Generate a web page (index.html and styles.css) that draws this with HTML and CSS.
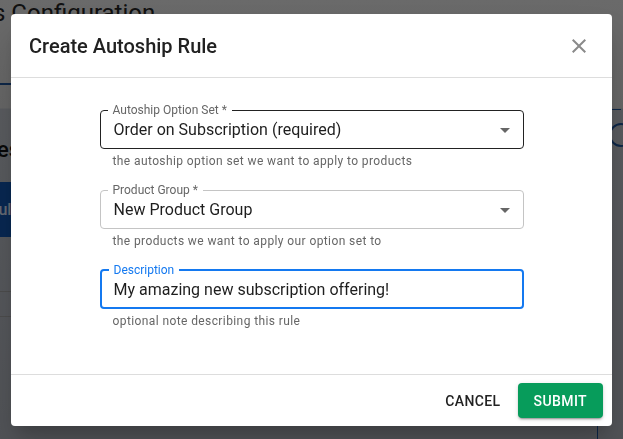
FILE: index.html
```html
<!DOCTYPE html>
<html lang="en">
<head>
  <meta charset="UTF-8">
  <meta name="viewport" content="width=device-width, initial-scale=1.0">
  <title>Autoships Configuration</title>
  <link rel="stylesheet" href="styles.css">
</head>
<body>
  <!-- Pagina sotto il dialog -->
  <div class="page">
    <h1 class="page-title">Autoships Configuration</h1>
    <div class="tabs">
      <span class="tab-indicator"></span>
    </div>
    <div class="page-body">
      <section class="rules">
        <h2>Autoship Rules</h2>
        <button class="add-btn">Add New Rule</button>
        <div class="rule-row"></div>
        <div class="rule-row short"></div>
      </section>
      <aside class="side">
        <span class="side-line"></span>
        <span class="ring"></span>
      </aside>
    </div>
    <div class="col-line"></div>
  </div>

  <!-- Dialog -->
  <div class="backdrop">
    <div class="dialog">
      <div class="dialog-head">
        <h3>Create Autoship Rule</h3>
        <button class="close-btn" aria-label="close">
          <svg viewBox="0 0 24 24" width="24" height="24"><path d="M19 6.41 17.59 5 12 10.59 6.41 5 5 6.41 10.59 12 5 17.59 6.41 19 12 13.41 17.59 19 19 17.59 13.41 12z"/></svg>
        </button>
      </div>

      <div class="dialog-body">
        <div class="form-group">
          <fieldset class="field hover">
            <legend>Autoship Option Set *</legend>
            <div class="value">
              <span>Order on Subscription (required)</span>
              <svg class="arrow" viewBox="0 0 24 24" width="24" height="24"><path d="M7 10l5 5 5-5z"/></svg>
            </div>
          </fieldset>
          <p class="helper">the autoship option set we want to apply to products</p>
        </div>

        <div class="form-group">
          <fieldset class="field">
            <legend>Product Group *</legend>
            <div class="value">
              <span>New Product Group</span>
              <svg class="arrow" viewBox="0 0 24 24" width="24" height="24"><path d="M7 10l5 5 5-5z"/></svg>
            </div>
          </fieldset>
          <p class="helper">the products we want to apply our option set to</p>
        </div>

        <div class="form-group">
          <fieldset class="field focused">
            <legend>Description</legend>
            <div class="value">
              <span>My amazing new subscription offering!</span>
            </div>
          </fieldset>
          <p class="helper">optional note describing this rule</p>
        </div>
      </div>

      <div class="dialog-foot">
        <button class="btn-text">Cancel</button>
        <button class="btn-submit">Submit</button>
      </div>
    </div>
  </div>
</body>
</html>
```

FILE: styles.css
```css
/* Stile generale */
body {
  margin: 0;
  height: 439px;
  overflow: hidden;
  font-family: Roboto, 'Liberation Sans', sans-serif;
  background: #b1b6be;
}

/* Pagina sotto il dialog */
.page {
  display: flex;
  flex-direction: column;
  height: 100%;
  background: linear-gradient(#d4d4d4 0, #cdcdcd 108px, #b4b8bf 109px, #a4a8b0 100%);
}

.page-title {
  margin: 0 0 0 -102px;
  font-size: 24px;
  line-height: 26px;
  font-weight: 400;
  color: #222;
  white-space: nowrap;
}

.tabs {
  display: flex;
  margin-top: 57px;
}

.tab-indicator {
  width: 120px;
  height: 2px;
  background: #1b4d8f;
}

.page-body {
  display: flex;
  justify-content: space-between;
}

.rules {
  margin-left: -160px;
  width: 180px;
}

.rules h2 {
  margin: 51px 0 0;
  font-size: 22px;
  line-height: 28px;
  font-weight: 500;
  text-align: right;
  color: #111;
  white-space: nowrap;
}

.add-btn {
  display: block;
  width: 100%;
  height: 55px;
  margin-top: 18px;
  padding: 0;
  border: none;
  background: #0f4fa3;
  color: #c8d4e6;
  font: 500 16px Roboto, sans-serif;
  text-align: right;
}

.rule-row {
  height: 54px;
  border-bottom: 1px solid #999;
}

.rule-row.short {
  height: 24px;
}

.side {
  display: flex;
  flex-direction: column;
  padding-top: 24px;
}

.side-line {
  width: 12px;
  height: 1px;
  background: #1b4d8f;
}

.ring {
  width: 20px;
  height: 20px;
  margin: 13px -10px 0 0;
  border: 2px solid #1b4d8f;
  border-radius: 50%;
}

.col-line {
  width: 1px;
  height: 14px;
  margin: auto 0 0 597px;
  background: #1b4d8f;
}

/* Dialog */
.backdrop {
  position: fixed;
  inset: 0;
  display: flex;
  align-items: flex-start;
  padding: 14px 0 0 11px;
  background: rgba(0, 0, 0, 0.5);
}

.dialog {
  width: 601px;
  background: #fff;
  border-radius: 4px;
  box-shadow: 0 11px 15px -7px rgba(0, 0, 0, 0.2), 0 24px 38px 3px rgba(0, 0, 0, 0.14);
}

.dialog-head {
  display: flex;
  align-items: center;
  justify-content: space-between;
  height: 63px;
  padding: 0 21px 0 18px;
  border-bottom: 1px solid #ddd;
}

.dialog-head h3 {
  margin: 0;
  font-size: 20px;
  font-weight: 500;
  color: #212121;
}

.close-btn {
  display: flex;
  padding: 0;
  border: none;
  background: none;
}

.close-btn svg {
  fill: #8a8a8a;
}

.dialog-body {
  width: 424px;
  margin: 0 auto;
  padding: 26px 0 44px;
}

.form-group {
  margin-bottom: 14px;
}

.form-group:last-child {
  margin-bottom: 0;
}

/* Campi con bordo e etichetta sul bordo */
.field {
  margin: 0;
  min-width: 0;
  padding: 0 13px 5px;
  border: 1px solid #c4c4c4;
  border-radius: 4px;
}

.field legend {
  margin-left: -6px;
  padding: 0 5px;
  font-size: 12px;
  line-height: 12px;
  color: #666;
}

.field.hover {
  border-color: #222;
}

.field.focused {
  padding: 0 12px 4px;
  border: 2px solid #1479f0;
}

.field.focused legend {
  margin-left: -5px;
  color: #1479f0;
}

.value {
  display: flex;
  align-items: center;
  justify-content: space-between;
  height: 27px;
  font-size: 16px;
  color: #1e1e1e;
}

.arrow {
  margin-right: -7px;
  fill: #666;
}

.helper {
  margin: 3px 0 0 13px;
  font-size: 12px;
  line-height: 18px;
  letter-spacing: 0.4px;
  color: #666;
}

/* Pulsanti */
.dialog-foot {
  display: flex;
  justify-content: flex-end;
  align-items: center;
  gap: 9px;
  padding: 8px 9px;
  border-top: 1px solid #ddd;
}

.dialog-foot button {
  height: 35px;
  border: none;
  border-radius: 4px;
  font: 500 14px Roboto, sans-serif;
  letter-spacing: 0.4px;
  text-transform: uppercase;
  cursor: pointer;
}

.btn-text {
  padding: 0 8px;
  background: none;
  color: #222;
}

.btn-submit {
  padding: 0 16px;
  background: #079c5b;
  color: #fff;
  box-shadow: 0 3px 1px -2px rgba(0, 0, 0, 0.2), 0 2px 2px 0 rgba(0, 0, 0, 0.14), 0 1px 5px 0 rgba(0, 0, 0, 0.12);
}
```
